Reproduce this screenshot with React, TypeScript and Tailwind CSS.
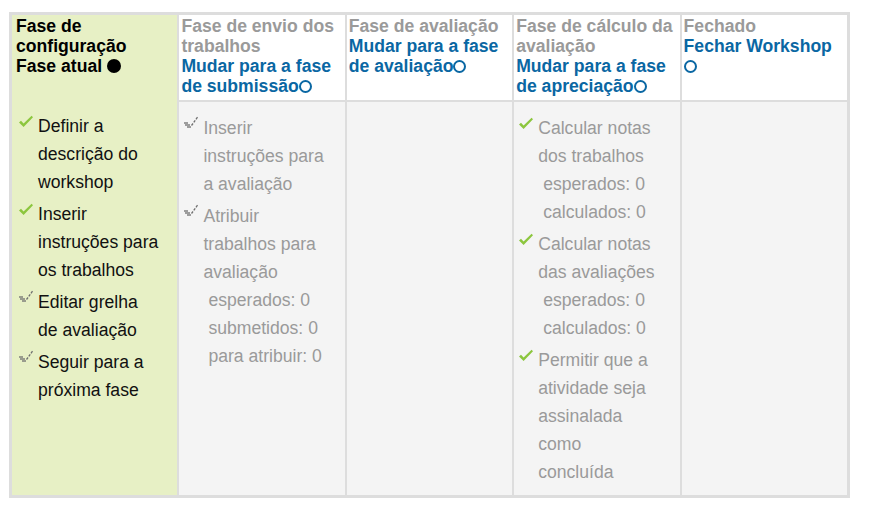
import React from 'react'

type Task = { done: boolean; text: string; sub?: string[] }

type Phase = {
    title: string
    current?: boolean
    link?: string
    linkIcon?: 'tight' | 'wrap'
    tasks: Task[]
}

const phases: Phase[] = [
    {
        title: 'Fase de configuração',
        current: true,
        tasks: [
            { done: true, text: 'Definir a descrição do workshop' },
            { done: true, text: 'Inserir instruções para os trabalhos' },
            { done: false, text: 'Editar grelha de avaliação' },
            { done: false, text: 'Seguir para a próxima fase' },
        ],
    },
    {
        title: 'Fase de envio dos trabalhos',
        link: 'Mudar para a fase de submissão',
        linkIcon: 'tight',
        tasks: [
            { done: false, text: 'Inserir instruções para a avaliação' },
            {
                done: false,
                text: 'Atribuir trabalhos para avaliação',
                sub: ['esperados: 0', 'submetidos: 0', 'para atribuir: 0'],
            },
        ],
    },
    {
        title: 'Fase de avaliação',
        link: 'Mudar para a fase de avaliação',
        linkIcon: 'tight',
        tasks: [],
    },
    {
        title: 'Fase de cálculo da avaliação',
        link: 'Mudar para a fase de apreciação',
        linkIcon: 'tight',
        tasks: [
            { done: true, text: 'Calcular notas dos trabalhos', sub: ['esperados: 0', 'calculados: 0'] },
            { done: true, text: 'Calcular notas das avaliações', sub: ['esperados: 0', 'calculados: 0'] },
            { done: true, text: 'Permitir que a atividade seja assinalada como concluída' },
        ],
    },
    {
        title: 'Fechado',
        link: 'Fechar Workshop',
        linkIcon: 'wrap',
        tasks: [],
    },
]

const Ring = () => (
    <span className="inline-block h-[13px] w-[13px] rounded-full border-2 border-[#0a67a3] align-[-1px]" />
)

const Dot = () => <span className="inline-block h-[14px] w-[14px] rounded-full bg-black align-[-1px]" />

const DoneIcon = () => (
    <svg width="16" height="14" viewBox="0 0 16 14" className="mt-[3px]">
        <path d="M1 7.5 L3 5.8 L5.6 8.6 L13.6 0.8 L15 2.2 L5.6 12 Z" fill="#8cc63e" />
    </svg>
)

const TodoIcon = () => (
    <svg width="16" height="14" viewBox="0 0 16 14" className="mt-[1px]">
        <g stroke="#6e6e6e" strokeWidth="1.3" fill="none">
            <path d="M1 8 L5 8" />
            <path d="M2 10 L7 10" />
            <path d="M4 12 L8 12" />
            <path d="M8.5 10.5 L10 8.5" />
            <path d="M10.8 7.4 L12.2 5.4" />
            <path d="M13 4.3 L14.5 2.2" />
        </g>
    </svg>
)

const PhaseHeader = ({ phase }: { phase: Phase }) => (
    <div
        className={
            phase.current
                ? 'bg-[#e7f0c5] pt-px pb-1 pl-[4px] pr-[2px] text-black'
                : 'border-b-2 border-[#dddddd] bg-white pt-px pb-1 pl-[2px] pr-[2px]'
        }
    >
        <div className={phase.current ? 'font-bold' : 'font-bold text-[#9a9a9a]'}>{phase.title}</div>
        {phase.current && (
            <div className="font-bold">
                Fase atual <Dot />
            </div>
        )}
        {phase.link && (
            <div className="font-bold text-[#0a67a3]">
                {phase.link}
                {phase.linkIcon === 'wrap' ? ' ' : ''}
                <Ring />
            </div>
        )}
    </div>
)

const PhaseBody = ({ phase }: { phase: Phase }) => (
    <div
        className={
            phase.current
                ? 'flex flex-col gap-1 bg-[#e7f0c5] pt-[10px] pb-[9px] pl-[6px] text-[#111]'
                : 'flex flex-col gap-1 bg-[#f4f4f4] pt-[12px] pb-[9px] pl-[4px] text-[#9a9a9a]'
        }
    >
        {phase.tasks.map((t) => (
            <div key={t.text} className="flex">
                <div className="w-[20px] shrink-0">{t.done ? <DoneIcon /> : <TodoIcon />}</div>
                <div className="w-[123px]">
                    <div>{t.text}</div>
                    {t.sub?.map((s) => (
                        <div key={s} className="pl-[5px]">
                            {s}
                        </div>
                    ))}
                </div>
            </div>
        ))}
    </div>
)

export default function App() {
    return (
        <div className="min-h-[514px] bg-white pt-3 pl-[9px] font-['Liberation_Sans',Arial,sans-serif] text-[17.6px]">
            <div className="w-[841px] bg-[#dddddd] p-[3px]">
                <div className="grid grid-cols-5 gap-x-[2px] leading-[20px]">
                    {phases.map((p) => (
                        <PhaseHeader key={p.title} phase={p} />
                    ))}
                </div>
                <div className="grid grid-cols-5 gap-x-[2px] leading-[28px]">
                    {phases.map((p) => (
                        <PhaseBody key={p.title} phase={p} />
                    ))}
                </div>
            </div>
        </div>
    )
}
